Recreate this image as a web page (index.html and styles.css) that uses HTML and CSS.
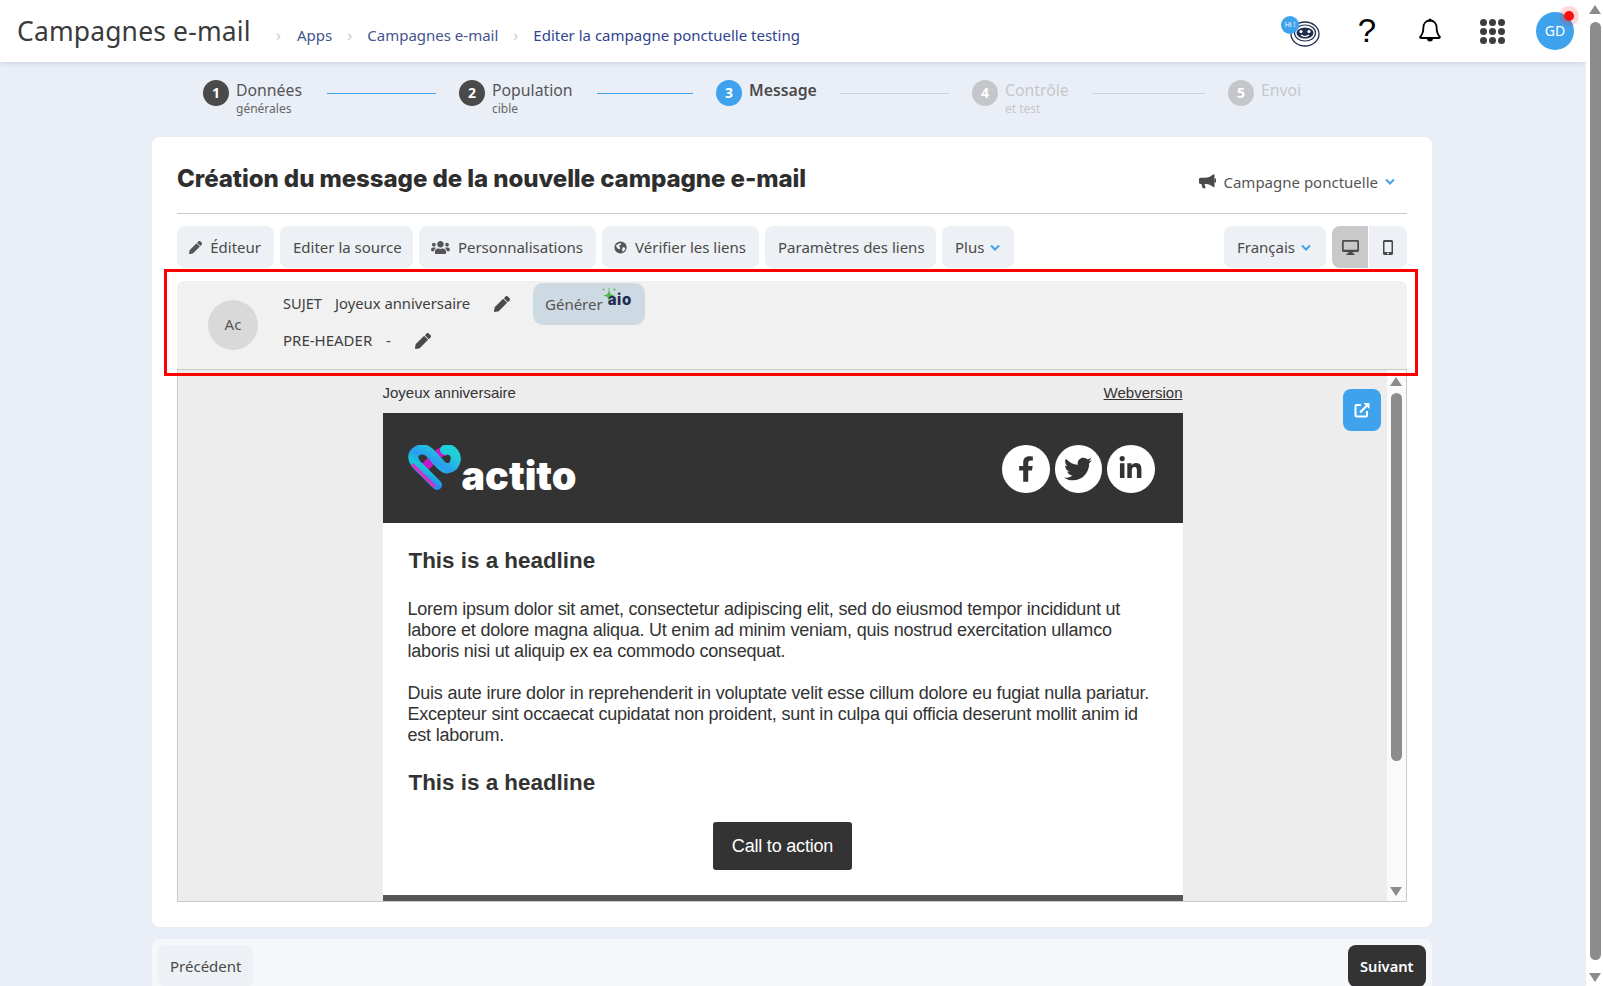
FILE: index.html
```html
<!DOCTYPE html>
<html lang="fr">
<head>
  <meta charset="UTF-8">
  <title>Campagnes e-mail</title>
  <link rel="stylesheet" href="styles.css">
</head>
<body>
  <div class="page">
    <div class="main">
      <header class="topbar">
        <div class="app-title">Campagnes e-mail</div>
        <nav class="crumbs">
          <span class="crumb-sep">›</span><a>Apps</a>
          <span class="crumb-sep">›</span><a>Campagnes e-mail</a>
          <span class="crumb-sep">›</span><a class="current">Editer la campagne ponctuelle testing</a>
        </nav>
        <div class="top-icons">
          <div class="bot">
            <svg width="32" height="28" viewBox="0 0 32 28"><ellipse cx="16" cy="14" rx="14" ry="12" fill="#fff" stroke="#1f2d4f" stroke-width="1.3"/><ellipse cx="16" cy="13" rx="10.5" ry="8" fill="#fff" stroke="#1f2d4f" stroke-width="1.2"/><ellipse cx="16" cy="13" rx="8.5" ry="5.5" fill="#1f2d4f"/><circle cx="12" cy="11.5" r="1.6" fill="#fff"/><circle cx="20" cy="11.5" r="1.6" fill="#fff"/><path d="M12 15 q4 3 8 0" stroke="#fff" stroke-width="1.2" fill="none"/></svg>
            <span class="bot-hi">Hi !</span>
          </div>
          <div class="icon-help">?</div>
          <svg class="icon-bell" width="22" height="26" viewBox="0 0 22 26"><path d="M11 2.5c-4 0-6.6 3-6.6 7 0 5-1.4 7.5-3.4 9.6 0 .6.3.9.9.9h18.2c.6 0 .9-.3.9-.9-2-2.1-3.4-4.6-3.4-9.6 0-4-2.600-7-6.600-7z" fill="none" stroke="#000" stroke-width="1.8"/><path d="M8 20.500a3 3 0 0 0 6 0z" fill="#000"/><circle cx="11" cy="2" r="1.500" fill="#000"/></svg>
          <div class="icon-grid"><i></i><i></i><i></i><i></i><i></i><i></i><i></i><i></i><i></i></div>
          <div class="user-badge">GD<span class="notif"></span></div>
        </div>
      </header>

      <div class="stepper">
        <div class="step"><span class="num">1</span><div class="step-text"><div class="step-name">Données</div><div class="step-sub">générales</div></div></div>
        <div class="step-line"></div>
        <div class="step"><span class="num">2</span><div class="step-text"><div class="step-name">Population</div><div class="step-sub">cible</div></div></div>
        <div class="step-line"></div>
        <div class="step active"><span class="num">3</span><div class="step-text"><div class="step-name">Message</div></div></div>
        <div class="step-line faded"></div>
        <div class="step todo"><span class="num">4</span><div class="step-text"><div class="step-name">Contrôle</div><div class="step-sub">et test</div></div></div>
        <div class="step-line faded"></div>
        <div class="step todo"><span class="num">5</span><div class="step-text"><div class="step-name">Envoi</div></div></div>
      </div>

      <section class="card">
        <div class="card-head">
          <h1>Création du message de la nouvelle campagne e-mail</h1>
          <div class="camp-type">
            <svg width="17" height="15" viewBox="0 0 17 15"><path d="M15.500 0.500v12.500l-1 .3c-2-2-4.500-3-7.500-3.300h-1.500l1.200 4.300h-3l-1.300-4.300h-.6c-1.300 0-2.300-1-2.300-2.200v-1.800c0-1.200 1-2.200 2.300-2.200h4.200c3 0 5.500-1.300 8.500-3.600z" fill="#4a4a4a"/><rect x="15.500" y="4.500" width="1.500" height="4" fill="#4a4a4a"/></svg>
            <span>Campagne ponctuelle</span>
            <svg class="chev" width="10" height="7" viewBox="0 0 10 7"><path d="M1 1.500l4 4 4-4" fill="none" stroke="#3ea2ec" stroke-width="2"/></svg>
          </div>
        </div>

        <div class="toolbar">
          <button class="btn"><svg width="15" height="15" viewBox="0 0 512 512"><path fill="#555" d="M497.900 142.100l-46.100 46.100c-4.700 4.700-12.300 4.700-17 0l-111-111c-4.700-4.700-4.700-12.300 0-17l46.100-46.100c18.700-18.700 49.100-18.700 67.900 0l60.100 60.100c18.800 18.700 18.800 49.100 0 67.900zM284.200 99.800L21.600 362.400.4 483.900c-2.900 16.400 11.400 30.600 27.800 27.800l121.500-21.300 262.600-262.600c4.700-4.700 4.700-12.300 0-17l-111-111c-4.800-4.700-12.400-4.700-17.100 0z"/></svg>Éditeur</button>
          <button class="btn">Editer la source</button>
          <button class="btn"><svg width="19" height="15" viewBox="0 0 640 512"><path fill="#555" d="M96 224c35.300 0 64-28.700 64-64s-28.700-64-64-64-64 28.700-64 64 28.700 64 64 64zm448 0c35.300 0 64-28.700 64-64s-28.700-64-64-64-64 28.700-64 64 28.700 64 64 64zm32 32h-64c-17.600 0-33.500 7.100-45.100 18.600 40.300 22.100 68.900 62 75.100 109.400h66c17.700 0 32-14.300 32-32v-32c0-35.300-28.700-64-64-64zm-256 0c61.900 0 112-50.100 112-112S381.900 32 320 32 208 82.100 208 144s50.100 112 112 112zm76.800 32h-8.300c-20.800 10-43.900 16-68.500 16s-47.600-6-68.500-16h-8.300C179.600 288 128 339.600 128 403.200V432c0 26.500 21.500 48 48 48h288c26.500 0 48-21.500 48-48v-28.800c0-63.600-51.600-115.200-115.200-115.200zm-223.700-13.400C161.500 263.100 145.600 256 128 256H64c-35.300 0-64 28.700-64 64v32c0 17.700 14.300 32 32 32h65.900c6.300-47.400 34.900-87.300 75.200-109.400z"/></svg>Personnalisations</button>
          <button class="btn"><svg width="15" height="15" viewBox="0 0 15 15"><circle cx="7.500" cy="7.500" r="7" fill="#555"/><path d="M2.500 5c2-1.500 4-2.500 5.500-2.500 1 1-.5 2-1.500 2.500s-.5 2 .5 2.500-.5 2.500-1.500 2c-1.500-1-3-2-3-4.500zM10 7.500c1.200-.5 2.500 0 3 1-.3 2-1.500 3.500-3 4-.8-1-1-3.500 0-5z" fill="#eef1f5"/></svg>Vérifier les liens</button>
          <button class="btn">Paramètres des liens</button>
          <button class="btn">Plus<svg class="chev" width="10" height="7" viewBox="0 0 10 7"><path d="M1 1.500l4 4 4-4" fill="none" stroke="#3ea2ec" stroke-width="2"/></svg></button>
          <button class="btn lang">Français<svg class="chev" width="10" height="7" viewBox="0 0 10 7"><path d="M1 1.500l4 4 4-4" fill="none" stroke="#3ea2ec" stroke-width="2"/></svg></button>
          <div class="device-group">
            <button class="device on"><svg width="17" height="15" viewBox="0 0 17 15"><path fill="#4a4a4a" d="M1.500 0h14c.8 0 1.500.7 1.500 1.500v9c0 .8-.7 1.500-1.500 1.500h-5l.5 1.500h1.500v1.500h-8v-1.500h1.500l.5-1.500h-5c-.8 0-1.500-.7-1.500-1.500v-9c0-.8.7-1.500 1.500-1.500zm.2 1.700v8h13.600v-8z"/></svg></button>
            <button class="device"><svg width="10" height="15" viewBox="0 0 10 15"><path fill="#4a4a4a" d="M1.500 0h7c.8 0 1.500.7 1.500 1.500v12c0 .8-.7 1.500-1.500 1.500h-7c-.8 0-1.500-.7-1.500-1.500v-12c0-.8.7-1.500 1.500-1.500zm0 2v10h7v-10zm3.500 10.500a.9.9 0 1 0 0 1.800.9.9 0 0 0 0-1.800z"/></svg></button>
          </div>
        </div>

        <div class="subject-panel">
          <div class="subject-avatar">Ac</div>
          <div class="subject-rows">
            <div class="subject-row first">
              <span class="field-label">SUJET</span>
              <span class="field-value">Joyeux anniversaire</span>
              <svg class="pen" width="16" height="16" viewBox="0 0 512 512"><path fill="#4a4a4a" d="M497.900 142.100l-46.100 46.100c-4.700 4.700-12.300 4.700-17 0l-111-111c-4.700-4.700-4.700-12.300 0-17l46.100-46.100c18.700-18.700 49.100-18.700 67.900 0l60.100 60.100c18.800 18.700 18.800 49.100 0 67.900zM284.200 99.800L21.600 362.400.4 483.900c-2.900 16.400 11.400 30.600 27.800 27.800l121.500-21.300 262.600-262.600c4.700-4.700 4.700-12.300 0-17l-111-111c-4.800-4.700-12.400-4.700-17.100 0z"/></svg>
              <button class="generate">Générer<span class="aio"><svg width="16" height="16" viewBox="0 0 16 16"><path d="M7 2l1.500 4L12.500 7.500 8.500 9 7 13 5.500 9 1.500 7.500 5.500 6z" fill="#52b84a"/><circle cx="1.500" cy="1.500" r="1" fill="#52b84a"/><circle cx="12.500" cy="1.500" r="1" fill="#52b84a"/><circle cx="7" cy="1" r=".8" fill="#52b84a"/></svg><b>aio</b></span></button>
            </div>
            <div class="subject-row">
              <span class="field-label">PRE-HEADER</span>
              <span class="field-value dash">-</span>
              <svg class="pen pen-two" width="16" height="16" viewBox="0 0 512 512"><path fill="#4a4a4a" d="M497.900 142.100l-46.100 46.100c-4.700 4.700-12.300 4.700-17 0l-111-111c-4.700-4.700-4.700-12.300 0-17l46.100-46.100c18.700-18.700 49.100-18.700 67.900 0l60.100 60.100c18.800 18.700 18.800 49.100 0 67.900zM284.200 99.800L21.600 362.400.4 483.900c-2.900 16.400 11.400 30.600 27.800 27.800l121.500-21.300 262.600-262.600c4.700-4.700 4.700-12.300 0-17l-111-111c-4.800-4.700-12.400-4.700-17.100 0z"/></svg>
            </div>
          </div>
        </div>

        <div class="preview">
          <div class="preview-body">
            <div class="email">
              <div class="email-top"><span>Joyeux anniversaire</span><a>Webversion</a></div>
              <div class="email-banner">
                <div class="brand">
                  <svg class="brand-mark" width="54" height="46" viewBox="0 0 54 46">
                    <defs><linearGradient id="ribbon" x1=".7" y1="0" x2=".2" y2=".75"><stop offset="0" stop-color="#1fd0d8"/><stop offset=".45" stop-color="#2b9cf0"/><stop offset=".75" stop-color="#16c8d8"/><stop offset="1" stop-color="#2b8cf0"/></linearGradient></defs>
                    <path d="M40 6Q34 6 30 10L17 23" fill="none" stroke="#c417c8" stroke-width="9"/>
                    <path d="M30 40L9 19Q3 10 10 6Q17 2 23 8L34 20Q40 26 46 21Q51 14 47 8Q43 3 38 5" fill="none" stroke="url(#ribbon)" stroke-width="10" stroke-linecap="round"/>
                    <path d="M27 41L6 20" fill="none" stroke="#e02ac0" stroke-width="3" stroke-linecap="round"/>
                  </svg>
                  <span class="brand-name">actito</span>
                </div>
                <div class="socials">
                  <span class="social"><svg width="16" height="26" viewBox="0 0 320 512"><path fill="#333" d="M279.140 288l14.220-92.660h-88.910v-60.130c0-25.350 12.420-50.060 52.240-50.060h40.420V6.260S260.430 0 225.360 0c-73.220 0-121.080 44.380-121.080 124.720v70.620H22.890V288h81.390v224h100.170V288z"/></svg></span>
                  <span class="social"><svg width="28" height="28" viewBox="0 0 512 512"><path fill="#333" d="M459.370 151.716c.325 4.548.325 9.097.325 13.645 0 138.720-105.583 298.558-298.558 298.558-59.452 0-114.680-17.219-161.137-47.106 8.447.974 16.568 1.299 25.340 1.299 49.055 0 94.213-16.568 130.274-44.832-46.132-.975-84.792-31.188-98.112-72.772 6.498.974 12.995 1.624 19.818 1.624 9.421 0 18.843-1.300 27.614-3.573-48.081-9.747-84.143-51.980-84.143-102.985v-1.299c13.969 7.797 30.214 12.670 47.431 13.319-28.264-18.843-46.781-51.005-46.781-87.391 0-19.492 5.197-37.360 14.294-52.954 51.655 63.675 129.300 105.258 216.365 109.807-1.624-7.797-2.599-15.918-2.599-24.040 0-57.828 46.782-104.934 104.934-104.934 30.213 0 57.502 12.670 76.670 33.137 23.715-4.548 46.456-13.320 66.599-25.340-7.798 24.366-24.366 44.833-46.132 57.827 21.117-2.273 41.584-8.122 60.426-16.243-14.292 20.791-32.161 39.308-52.628 54.253z"/></svg></span>
                  <span class="social"><svg width="25" height="25" viewBox="0 0 448 512"><path fill="#333" d="M100.280 448H7.400V148.900h92.880zM53.790 108.100C24.090 108.100 0 83.500 0 53.800a53.790 53.790 0 0 1 107.580 0c0 29.700-24.100 54.300-53.790 54.300zM447.900 448h-92.680V302.400c0-34.700-.7-79.200-48.290-79.200-48.290 0-55.690 37.700-55.690 76.700V448h-92.780V148.900h89.080v40.800h1.300c12.400-23.500 42.690-48.300 87.880-48.300 94 0 111.280 61.900 111.280 142.300V448z"/></svg></span>
                </div>
              </div>
              <div class="email-content">
                <h2>This is a headline</h2>
                <p>Lorem ipsum dolor sit amet, consectetur adipiscing elit, sed do eiusmod tempor incididunt ut labore et dolore magna aliqua. Ut enim ad minim veniam, quis nostrud exercitation ullamco laboris nisi ut aliquip ex ea commodo consequat.</p>
                <p class="next">Duis aute irure dolor in reprehenderit in voluptate velit esse cillum dolore eu fugiat nulla pariatur. Excepteur sint occaecat cupidatat non proident, sunt in culpa qui officia deserunt mollit anim id est laborum.</p>
                <h2 class="second">This is a headline</h2>
                <div class="cta-wrap"><a class="cta">Call to action</a></div>
              </div>
              <div class="email-foot"></div>
            </div>
          </div>
          <div class="inner-scroll">
            <span class="arrow-up"></span>
            <span class="inner-thumb"></span>
            <span class="arrow-down"></span>
          </div>
          <button class="open-btn"><svg width="16" height="16" viewBox="0 0 16 16"><path d="M7 3H2.500C2 3 1.500 3.500 1.500 4v9.500c0 .5.5 1 1 1H12c.5 0 1-.5 1-1V9" fill="none" stroke="#fff" stroke-width="2"/><path d="M6 10.500L14 2.500" stroke="#fff" stroke-width="2.200"/><path d="M9.500 1h6v6z" fill="#fff"/></svg></button>
        </div>
      </section>

      <div class="actions">
        <button class="btn">Précédent</button>
        <button class="btn btn-dark">Suivant</button>
      </div>
    </div>

    <div class="page-scroll">
      <span class="arrow-up"></span>
      <span class="page-thumb"></span>
      <span class="arrow-down"></span>
    </div>

    <div class="highlight"></div>
  </div>
</body>
</html>
```

FILE: styles.css
```css
* { box-sizing: border-box; }
html, body { margin: 0; padding: 0; height: 986px; overflow: hidden; }
body { font-family: "Noto Sans", Arial, sans-serif; color: #4a4a4a; background: #fff; }
button { font-family: inherit; border: 0; cursor: pointer; }
h1, h2, p { margin: 0; }

.page { position: relative; display: flex; height: 986px; overflow: hidden; }
.main { width: 1586px; flex: none; height: 986px; background: #eaeff7; overflow: hidden; }

/* header */
.topbar { position: relative; display: flex; align-items: center; height: 62px; padding: 0 12px 0 17px; background: #fff; box-shadow: 0 1px 6px rgba(60,70,100,.18); }
.app-title { font-size: 26.400px; color: #3a3a3a; width: 234px; flex: none; letter-spacing: .2px; white-space: nowrap; }
.crumbs { display: flex; align-items: center; font-size: 15px; padding-top: 7px; color: #3f51a0; }
.crumbs a { color: #43558f; white-space: nowrap; }
.crumbs a.current { color: #2f4490; }
.crumb-sep { color: #c9c9c9; font-size: 16px; width: 35px; text-align: center; }
.crumbs .crumb-sep:first-child { width: 46px; text-align: right; padding-right: 16px; }
.top-icons { display: flex; align-items: center; margin-left: auto; }
.bot { position: relative; width: 40px; height: 36px; margin-right: 36px; padding: 7px 0 0 8px; }
.bot-hi { position: absolute; left: 0; top: 3px; width: 18px; height: 18px; border-radius: 50%; background: #3ea2ec; color: #fff; font-size: 7px; line-height: 18px; text-align: center; }
.icon-help { font-family: "Liberation Sans", sans-serif; font-size: 33px; color: #000; width: 20px; margin-right: 42px; text-align: center; line-height: 36px; }
.icon-bell { margin-right: 39px; }
.icon-grid { display: grid; grid-template-columns: repeat(3, 7px); gap: 2px; margin-right: 31px; }
.icon-grid i { width: 7px; height: 7px; border-radius: 50%; background: #3d3d3d; }
.user-badge { position: relative; width: 38px; height: 38px; border-radius: 50%; background: #3ea2ec; color: #fff; font-size: 14px; line-height: 38px; text-align: center; }
.notif { position: absolute; top: -1px; right: 0; width: 10px; height: 10px; border-radius: 50%; background: #ff0d0d; box-shadow: 0 0 0 5px rgba(255,40,40,.18); }

/* steps */
.stepper { display: grid; grid-template-columns: 124px 132px 138px 119px 124px 132px 120px 136px auto; height: 75px; padding: 18px 0 0 203px; }
.step { display: flex; gap: 7px; }
.num { flex: none; width: 26px; height: 26px; border-radius: 50%; background: #4a4a4a; color: #fff; font-size: 14px; font-weight: 700; line-height: 26px; text-align: center; }
.step-name { font-size: 15.800px; line-height: 21px; color: #555; }
.step-sub { font-size: 12px; line-height: 15px; color: #666; }
.step.active .num { background: #3ea2ec; }
.step.active .step-name { font-weight: 600; color: #4a4a4a; }
.step.todo .num { background: #c4c6ca; }
.step.todo .step-name, .step.todo .step-sub { color: #c6c7cc; }
.step-line { height: 1px; margin: 13px 23px 0 0; background: #3ea2ec; }
.step-line.faded { background: #cfd3d8; }

/* card */
.card { width: 1280px; margin-left: 152px; height: 790px; padding: 0 25px; background: #fff; border-radius: 8px; }
.card-head { display: flex; justify-content: space-between; height: 77px; border-bottom: 1px solid #cccccc; }
.card-head h1 { font-family: Inter, sans-serif; font-size: 24.100px; font-weight: 800; color: #2e2e2e; line-height: 32px; padding-top: 26px; letter-spacing: -.1px; }
.camp-type { display: flex; align-items: center; gap: 7px; padding: 13px 12px 0 0; font-size: 15px; color: #555; }
.chev { flex: none; }

.toolbar { display: flex; gap: 6px; margin-top: 12px; }
.btn { display: inline-flex; align-items: center; gap: 7px; height: 42px; padding: 0 13px; border-radius: 8px; background: #edf0f4; color: #4a4a4a; font-size: 15px; white-space: nowrap; }
.btn > svg:first-child { margin: 0 1px 0 -1px; }
.toolbar .btn:nth-child(1) { width: 97px; }
.toolbar .btn:nth-child(2) { width: 133px; }
.toolbar .btn:nth-child(3) { width: 177px; }
.toolbar .btn:nth-child(4) { width: 157px; }
.toolbar .btn:nth-child(5) { width: 171px; }
.toolbar .btn:nth-child(6) { width: 72px; }
.btn.lang { width: 102px; margin-left: auto; }
.device-group { display: flex; }
.device { width: 37px; height: 42px; background: #edf0f4; display: flex; align-items: center; justify-content: center; border-radius: 0 8px 8px 0; padding: 0; }
.device.on { background: #c9c9c9; border-radius: 8px 0 0 8px; border-right: 1px solid #fff; }
.device + .device { width: 38px; }

/* subject block */
.subject-panel { display: flex; height: 88px; margin-top: 13px; padding: 2px 0 0 31px; background: #f1f1f1; border-radius: 6px 6px 0 0; }
.subject-avatar { flex: none; width: 50px; height: 50px; margin: 17px 25px 0 0; border-radius: 50%; background: #d9d9d9; text-align: center; line-height: 48px; font-size: 15px; color: #555; }
.subject-row { display: flex; align-items: center; color: #3f3f3f; margin-top: 8px; height: 16px; }
.subject-row.first { height: 42px; margin-top: 0; }
.field-label { width: 52px; font-size: 14.600px; white-space: nowrap; padding-bottom: 2px; }
.subject-row:not(.first) .field-label { width: 103px; font-size: 15px; }
.field-value { width: 159px; font-size: 14.800px; white-space: nowrap; padding-bottom: 2px; }
.field-value.dash { width: 29px; }
.generate { display: flex; height: 42px; align-items: center; width: 112px; margin-left: 23px; padding: 0 0 0 12px; border-radius: 10px; background: #cdd9e3; color: #555; font-size: 15px; }
.aio { position: relative; width: 38px; height: 42px; }
.aio svg { position: absolute; left: -1px; top: 5px; }
.aio b { position: absolute; left: 5px; top: 7px; font-family: Inter, sans-serif; font-size: 15px; line-height: 20px; font-weight: 800; letter-spacing: .6px; color: #1d2b4f; }

/* preview */
.preview { position: relative; display: flex; height: 533px; border: 1px solid #c9c9c9; background: #ededed; overflow: hidden; }
.preview-body { flex: 1; overflow: hidden; }
.email { width: 800px; margin: 0 auto; }
.email-top { display: flex; justify-content: space-between; height: 43px; padding-top: 14px; font-family: "Liberation Sans", Arial, sans-serif; font-size: 15px; line-height: 18px; color: #333; }
.email-top a { text-decoration: underline; }
.email-banner { display: flex; align-items: flex-start; justify-content: space-between; height: 110px; padding: 32px 28px 0 24px; background: #333; }
.brand { display: flex; align-items: flex-end; height: 46px; }
.brand-name { font-family: Inter, sans-serif; font-size: 39.500px; font-weight: 900; line-height: 36px; color: #fff; margin: 0 0 -3px 1px; }
.socials { display: flex; gap: 5px; }
.social { display: flex; align-items: center; justify-content: center; width: 47.500px; height: 47.500px; border-radius: 50%; background: #fff; }
.email-content { height: 372px; padding: 0 25px; background: #fff; font-family: "Liberation Sans", Arial, sans-serif; color: #333; }
.email-content h2 { padding: 25px 0 0 1px; font-size: 22.400px; line-height: 26px; font-weight: 700; }
.email-content h2.second { padding-top: 24px; }
.email-content p { margin-top: 25px; font-size: 18px; line-height: 21px; letter-spacing: -.215px; }
.email-content p.next { margin-top: 21px; }
.cta-wrap { display: flex; justify-content: center; margin-top: 26px; }
.cta { display: block; width: 139px; height: 48px; border-radius: 3px; background: #333; color: #fff; font-size: 18px; line-height: 48px; text-align: center; letter-spacing: -.2px; }
.email-foot { height: 8px; background: #555; }

.inner-scroll { position: relative; flex: none; width: 19px; background: #fafafa; }
.inner-thumb { position: absolute; left: 4px; top: 23px; width: 11px; height: 368px; border-radius: 6px; background: #8c8c8c; }
.arrow-up, .arrow-down { position: absolute; width: 0; height: 0; border-left: 6px solid transparent; border-right: 6px solid transparent; }
.arrow-up { border-bottom: 9px solid #8c8c8c; }
.arrow-down { border-top: 9px solid #8c8c8c; }
.inner-scroll .arrow-up { left: 3px; top: 7px; }
.inner-scroll .arrow-down { left: 3px; top: 517px; }
.open-btn { position: absolute; left: 1165px; top: 19px; display: flex; align-items: center; justify-content: center; width: 38px; height: 42px; padding: 0; border-radius: 8px; background: #3ea2ec; }

/* footer actions */
.actions { display: flex; justify-content: space-between; width: 1280px; height: 60px; margin: 12px 0 0 152px; padding: 6px 6px 0 6px; background: #f5f7fb; border-radius: 8px 8px 0 0; }
.actions .btn { height: 42px; padding: 0 12px; }
.actions .btn:first-child { width: 95px; }
.actions .btn-dark { width: 78px; background: #333; color: #fff; font-weight: 600; font-size: 14.700px; }

/* page scrollbar */
.page-scroll { position: relative; flex: 1; background: #fff; }
.page-thumb { position: absolute; left: 4px; top: 22px; width: 11px; height: 938px; border-radius: 6px; background: #8c8c8c; }
.page-scroll .arrow-up { left: 3px; top: 5px; }
.page-scroll .arrow-down { left: 3px; top: 973px; }

.highlight { position: absolute; left: 164px; top: 269px; width: 1254px; height: 107px; border: 3px solid #ff0000; pointer-events: none; }
```
